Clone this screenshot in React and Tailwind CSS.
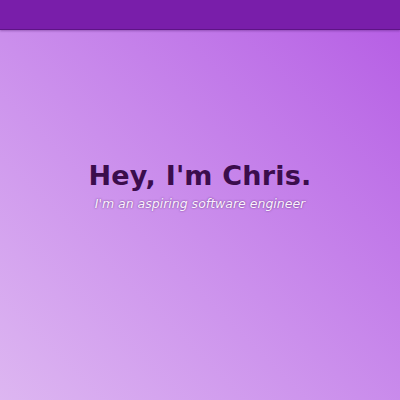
import React from 'react';

function App() {
  return (
    <div className="relative h-[400px] w-[400px] overflow-hidden bg-gradient-to-tr from-[#ddb6f1] to-[#b55be4]">
      <header className="h-[30px] w-full bg-[#791eaa] border-b border-[#5e1486] shadow-[0_1px_2px_rgba(60,10,90,0.35)]" />
      <main className="flex flex-col items-center pt-[129px]">
        <h1
          className="text-[27px] font-bold leading-[34px] tracking-[0.2px] text-[#3b0d4c]"
          style={{ fontFamily: '"DejaVu Sans", "Open Sans", sans-serif' }}
        >
          Hey, I'm Chris.
        </h1>
        <p
          className="mt-[2px] text-[12.5px] italic text-[#fbf2ff] [text-shadow:0_0_2px_rgba(60,10,80,0.7)]"
          style={{ fontFamily: '"DejaVu Sans", "Open Sans", sans-serif' }}
        >
          I'm an aspiring software engineer
        </p>
      </main>
    </div>
  );
}

export default App;
